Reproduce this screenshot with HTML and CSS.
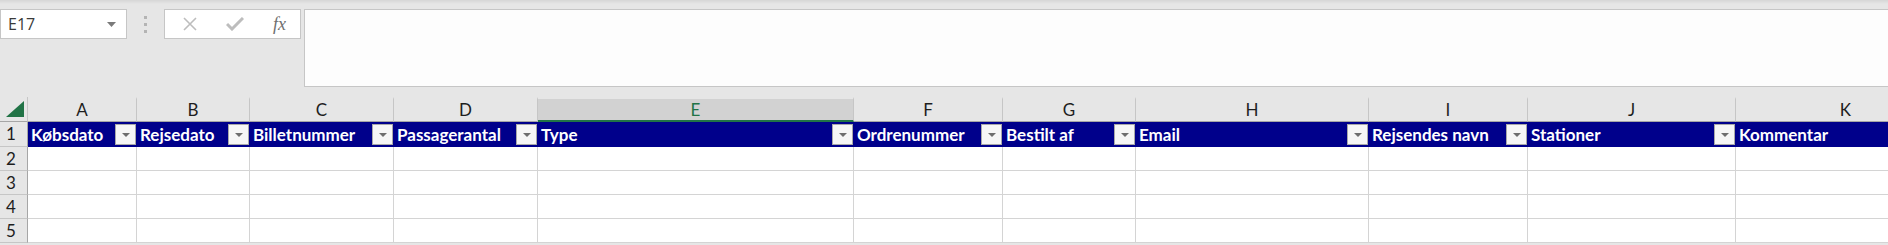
FILE: index.html
```html
<html>
  <head>
    <title>Rejser</title>
    <link rel="stylesheet" href="styles.css">
  </head>

  <body>
    <div class="toolbar">
      <div class="name-box">
        <span class="cell-ref">E17</span>
        <svg class="caret" width="9" height="5" viewBox="0 0 9 5"><path d="M0 0h9L4.5 5z" fill="#7a7a7a"/></svg>
      </div>
      <div class="grip"><i></i><i></i><i></i></div>
      <div class="fx-buttons">
        <svg class="fx-icon" width="14" height="14" viewBox="0 0 14 14"><path d="M1 1l12 12M13 1L1 13" stroke="#bdbdbd" stroke-width="1.6" fill="none"/></svg>
        <svg class="fx-icon" width="18" height="14" viewBox="0 0 18 14"><path d="M1 7l5 5L17 1" stroke="#bdbdbd" stroke-width="3" fill="none"/></svg>
        <span class="fx">fx</span>
      </div>
      <div class="formula-input"></div>
    </div>

    <div class="sheet">
      <!-- column letters -->
      <div class="corner"><svg width="18" height="16" viewBox="0 0 18 16"><path d="M18 0v16H0z" fill="#217346"/></svg></div>
      <div class="col-head">A</div>
      <div class="col-head">B</div>
      <div class="col-head">C</div>
      <div class="col-head">D</div>
      <div class="col-head active">E</div>
      <div class="col-head">F</div>
      <div class="col-head">G</div>
      <div class="col-head">H</div>
      <div class="col-head">I</div>
      <div class="col-head">J</div>
      <div class="col-head">K</div>

      <!-- table header row -->
      <div class="row-head">1</div>
      <div class="th"><span>Købsdato</span><b class="filter"></b></div>
      <div class="th"><span>Rejsedato</span><b class="filter"></b></div>
      <div class="th"><span>Billetnummer</span><b class="filter"></b></div>
      <div class="th"><span>Passagerantal</span><b class="filter"></b></div>
      <div class="th"><span>Type</span><b class="filter"></b></div>
      <div class="th"><span>Ordrenummer</span><b class="filter"></b></div>
      <div class="th"><span>Bestilt af</span><b class="filter"></b></div>
      <div class="th"><span>Email</span><b class="filter"></b></div>
      <div class="th"><span>Rejsendes navn</span><b class="filter"></b></div>
      <div class="th"><span>Stationer</span><b class="filter"></b></div>
      <div class="th"><span>Kommentar</span></div>
    </div>

    <script>
      // empty rows 2-5
      const sheet = document.querySelector('.sheet');
      for (let r = 2; r <= 5; r++) {
        const head = document.createElement('div');
        head.className = 'row-head';
        head.textContent = r;
        sheet.appendChild(head);
        for (let c = 0; c < 11; c++) {
          const cell = document.createElement('div');
          cell.className = 'cell';
          sheet.appendChild(cell);
        }
      }
    </script>
  </body>
</html>
```

FILE: styles.css
```css
body {
  margin: 0;
  width: 1888px;
  height: 245px;
  overflow: hidden;
  background: #e6e6e6;
  font-family: Lato, "Open Sans", sans-serif;
}

.toolbar {
  height: 97px;
  box-sizing: border-box;
  padding-top: 9px;
  display: flex;
  align-items: flex-start;
  background: linear-gradient(#d6d6d6 0, #e6e6e6 4px);
}

.name-box {
  width: 127px;
  height: 30px;
  box-sizing: border-box;
  border: 1px solid #c6c6c6;
  background: #fff;
  display: flex;
  align-items: center;
  justify-content: space-between;
  padding: 0 10px 0 7px;
}

.cell-ref {
  font-family: "Open Sans", sans-serif;
  font-size: 16px;
  color: #3a3a3a;
}

.caret {
  margin-top: 1px;
}

.grip {
  width: 37px;
  height: 30px;
  display: flex;
  flex-direction: column;
  align-items: center;
  justify-content: center;
  gap: 4px;
}

.grip i {
  width: 3px;
  height: 3px;
  background: #b4b4b4;
}

.fx-buttons {
  width: 137px;
  height: 30px;
  box-sizing: border-box;
  border: 1px solid #c6c6c6;
  background: #fff;
  display: flex;
  align-items: center;
  justify-content: space-between;
  padding: 0 14px 0 18px;
}

.fx {
  font-family: "Liberation Serif", serif;
  font-style: italic;
  font-size: 18px;
  color: #6f6f6f;
}

.formula-input {
  flex: 1;
  margin-left: 3px;
  margin-right: -2px;
  height: 78px;
  box-sizing: border-box;
  border: 1px solid #c6c6c6;
  background: #fdfdfd;
}

.sheet {
  display: grid;
  grid-template-columns: 28px 109px 113px 144px 144px 316px 149px 133px 233px 159px 208px 220px;
  grid-template-rows: 25px 25px 24px 24px 24px 24px;
  font-size: 17px;
}

.corner {
  border-right: 1px solid #c6c6c6;
  border-bottom: 1px solid #a6a6a6;
  display: flex;
  align-items: flex-end;
  justify-content: flex-end;
  padding: 0 3px 4px 0;
}

.col-head {
  border-right: 1px solid #c6c6c6;
  border-bottom: 1px solid #a6a6a6;
  border-top: 2px solid #e6e6e6;
  text-align: center;
  line-height: 22px;
  color: #1e1e1e;
}

.col-head.active {
  background: #d2d2d2;
  border-top-color: #e6e6e6;
  border-bottom: 2px solid #217346;
  color: #217346;
  line-height: 21px;
}

.row-head {
  border-right: 1px solid #a6a6a6;
  border-bottom: 1px solid #c6c6c6;
  text-align: left;
  padding-left: 6px;
  line-height: 24px;
  color: #1e1e1e;
}

.th {
  background: #00008b;
  color: #fff;
  font-weight: bold;
  display: flex;
  align-items: center;
  justify-content: space-between;
  padding-left: 3px;
  overflow: hidden;
  white-space: nowrap;
}

.filter {
  width: 21px;
  height: 21px;
  box-sizing: border-box;
  margin-right: 1px;
  border: 1px solid #a9a9a9;
  background: #f6f6f6;
  position: relative;
}

.filter::after {
  content: '';
  position: absolute;
  left: 6px;
  top: 8px;
  border-left: 4px solid transparent;
  border-right: 4px solid transparent;
  border-top: 4px solid #6e6e6e;
}

.cell {
  background: #fff;
  border-right: 1px solid #d4d4d4;
  border-bottom: 1px solid #d4d4d4;
}
```
